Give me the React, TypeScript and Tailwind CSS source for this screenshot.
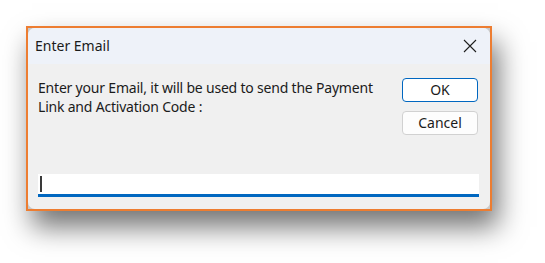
import React from 'react';

const CloseIcon: React.FC = () => (
  <svg width="14" height="14" viewBox="0 0 14 14" fill="none">
    <path d="M1 1L13 13M13 1L1 13" stroke="#1f1f1f" strokeWidth="1.1" />
  </svg>
);

export default function App() {
  return (
    <div
      className="w-[545px] h-[263px] bg-white pl-[26px] pt-[26px]"
      style={{ fontFamily: '"Noto Sans", "Open Sans", sans-serif' }}
    >
      <div className="w-[466px] h-[185px] border-2 border-[#ed7d31] bg-[#c9c9c9] shadow-[6px_16px_26px_rgba(0,0,0,0.55)]">
        <div className="h-full rounded-[7px] overflow-hidden bg-[#f0f0f0] flex flex-col">
          {/* title bar */}
          <div className="h-[36px] bg-[#eef2f9] flex items-center justify-between pl-[7px] pr-[13px]">
            <span className="text-[14px] text-[#1b1b1b] leading-none">Enter Email</span>
            <CloseIcon />
          </div>

          {/* body */}
          <div className="flex-1 flex flex-col pl-[10px] pr-[12px] pt-[14px] pb-[12px]">
            <div className="flex items-start justify-between">
              <p className="text-[14px] leading-[19px] text-[#1b1b1b] tracking-[-0.2px]">
                Enter your Email, it will be used to send the Payment
                <br />
                Link and Activation Code :
              </p>
              <div className="flex flex-col gap-[9px]">
                <button className="w-[76px] h-[24px] rounded-[4px] bg-white border border-[#0067c0] text-[14px] text-[#1b1b1b] leading-none">
                  OK
                </button>
                <button className="w-[76px] h-[24px] rounded-[4px] bg-[#fdfdfd] border border-[#d1d1d1] text-[14px] text-[#1b1b1b] leading-none">
                  Cancel
                </button>
              </div>
            </div>

            <div className="mt-auto mr-[-1px] h-[23px] bg-white border-b-[3px] border-[#0067c0] flex items-center pl-[2px]">
              <div className="w-[2px] h-[16px] bg-[#3a3a3a]" />
            </div>
          </div>
        </div>
      </div>
    </div>
  );
}
